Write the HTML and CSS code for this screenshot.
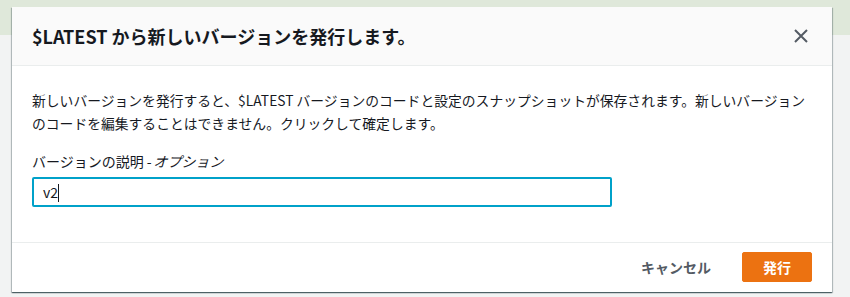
FILE: index.html
```html
<!DOCTYPE html>
<html>
<head>
  <meta charset="UTF-8">
  <title>新しいバージョンを発行</title>
  <link rel="stylesheet" href="styles.css">
</head>
<body>
  <div class="modal">
    <div class="modal-header">
      <h2>$LATEST から新しいバージョンを発行します。</h2>
      <button class="close-button" aria-label="閉じる">
        <svg width="14" height="14" viewBox="0 0 14 14">
          <path d="M1 1 L13 13 M13 1 L1 13" stroke="#545b64" stroke-width="2" fill="none"/>
        </svg>
      </button>
    </div>

    <div class="modal-body">
      <p>新しいバージョンを発行すると、$LATEST バージョンのコードと設定のスナップショットが保存されます。新しいバージョンのコードを編集することはできません。クリックして確定します。</p>
      <label for="description">バージョンの説明 - <i class="optional">オプション</i></label>
      <div class="text-input" id="description">v2<span class="caret"></span></div>
    </div>

    <div class="modal-footer">
      <button class="cancel-button">キャンセル</button>
      <button class="primary-button">発行</button>
    </div>
  </div>
</body>
</html>
```

FILE: styles.css
```css
body {
  margin: 0;
  padding: 7px 0 0 12px;
  height: 297px;
  box-sizing: border-box;
  background: linear-gradient(#dfe8da 0, #dfe8da 35px, #f2f3f3 35px);
  font-family: "Noto Sans CJK JP", sans-serif;
  color: #16191f;
  overflow: hidden;
}

.modal {
  width: 820px;
  background-color: #ffffff;
  box-shadow: 0 1px 1px 0 rgba(0, 28, 36, 0.5), 1px 1px 1px 0 rgba(0, 28, 36, 0.2), -1px 1px 1px 0 rgba(0, 28, 36, 0.2);
}

.modal-header {
  display: flex;
  align-items: center;
  justify-content: space-between;
  height: 58px;
  padding: 0 20px;
  background-color: #fafafa;
  border-bottom: 1px solid #eaeded;
}

.modal-header h2 {
  margin: 0;
  font-size: 18px;
  font-weight: bold;
  line-height: 24px;
}

.close-button {
  border: none;
  background: none;
  padding: 0;
  margin-right: 4px;
  width: 14px;
  height: 14px;
  cursor: pointer;
}

.close-button svg {
  display: block;
}

.modal-body {
  padding: 23px 20px 35px;
}

.modal-body p {
  max-width: 776px;
  margin: 0 0 15px;
  font-size: 13.8px;
  line-height: 23px;
}

label {
  display: block;
  font-size: 14px;
  line-height: 22px;
  margin-bottom: 5px;
}

.optional {
  display: inline-block;
  font-style: normal;
  transform: skewX(-16deg);
}

.text-input {
  width: 580px;
  height: 30px;
  box-sizing: border-box;
  border: 2px solid #00a1c9;
  border-radius: 2px;
  padding: 0 9px;
  font-size: 14px;
  line-height: 26px;
}

.caret {
  display: inline-block;
  width: 1px;
  height: 18px;
  background-color: #16191f;
  vertical-align: -4px;
}

.modal-footer {
  display: flex;
  justify-content: flex-end;
  align-items: center;
  gap: 16px;
  padding: 9px 20px 10px;
  border-top: 1px solid #eaeded;
}

.cancel-button {
  background: none;
  border: none;
  color: #545b64;
  font-family: inherit;
  font-size: 14px;
  font-weight: bold;
  padding: 4px 15px;
  cursor: pointer;
}

.primary-button {
  width: 70px;
  height: 30px;
  background-color: #ec7211;
  border: 1px solid #ec7211;
  border-radius: 2px;
  color: #ffffff;
  font-family: inherit;
  font-size: 14px;
  font-weight: bold;
  cursor: pointer;
}
```
